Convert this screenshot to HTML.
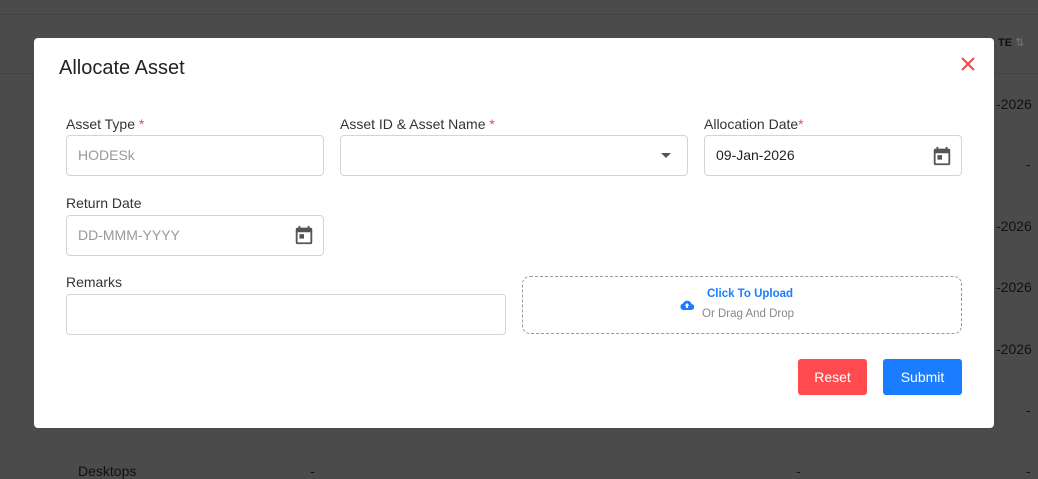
<!DOCTYPE html>
<html><head><style>
*{box-sizing:border-box;margin:0;padding:0}
body{width:1038px;height:478px;overflow:hidden;background:#4b4b4b;font-family:"Liberation Sans",sans-serif;position:relative;color:#222}
.bg{position:absolute;left:0;right:0;height:1px;background:#434343}
.bgt{position:absolute;color:#111;font-size:14px}
.modal{position:absolute;left:34px;top:38px;width:960px;height:390px;background:#fff;border-radius:4px}
.abs{position:absolute}
.lbl{position:absolute;font-size:14px;color:#333}
.req{color:#e84b4b}
.inp{position:absolute;height:41px;border:1px solid #d4d4d4;border-radius:4px;font-size:14px;padding-left:11px;line-height:39px}
.ph{color:#999}
.btn{position:absolute;height:36px;border-radius:3px;color:#fff;font-size:14px;text-align:center;line-height:36px}
</style></head><body>
<div class="bg" style="top:14px"></div>
<div class="bg" style="top:73px"></div>
<div class="bgt" style="left:998px;top:36px;font-size:11px;font-weight:bold">TE <span style="color:#777;font-weight:normal">⇅</span></div>
<div class="bgt" style="left:996px;top:96px">-2026</div>
<div class="bgt" style="left:1026px;top:156px">-</div>
<div class="bgt" style="left:996px;top:218px">-2026</div>
<div class="bgt" style="left:996px;top:279px">-2026</div>
<div class="bgt" style="left:996px;top:341px">-2026</div>
<div class="bgt" style="left:1026px;top:402px">-</div>
<div class="bgt" style="left:78px;top:463px">Desktops</div>
<div class="bgt" style="left:310px;top:463px">-</div>
<div class="bgt" style="left:796px;top:463px">-</div>
<div class="bgt" style="left:1026px;top:463px">-</div>
<div class="modal">
<div class="abs" style="left:25px;top:19px;font-size:20px;color:#222">Allocate Asset</div>
<svg class="abs" style="left:927px;top:19px" width="14" height="14" viewBox="0 0 14 14"><path d="M1 1L13 13M13 1L1 13" stroke="#f04848" stroke-width="2"/></svg>
<div class="lbl" style="left:32px;top:78px">Asset Type <span class="req">*</span></div>
<div class="inp ph" style="left:32px;top:97px;width:258px">HODESk</div>
<div class="lbl" style="left:306px;top:78px">Asset ID &amp; Asset Name <span class="req">*</span></div>
<div class="inp" style="left:306px;top:97px;width:348px"></div>
<svg class="abs" style="left:627px;top:115px" width="10" height="6"><path d="M0 0L10 0L5 5Z" fill="#555"/></svg>
<div class="lbl" style="left:670px;top:78px">Allocation Date<span class="req">*</span></div>
<div class="inp" style="left:670px;top:97px;width:258px">09-Jan-2026</div>
<svg class="abs" style="left:897px;top:107px" width="22" height="22" viewBox="0 0 24 24"><path fill="#555" d="M19 4h-1V2h-2v2H8V2H6v2H5a2 2 0 0 0-2 2v14a2 2 0 0 0 2 2h14a2 2 0 0 0 2-2V6a2 2 0 0 0-2-2zm0 16H5V9h14v11zM7 11h5v5H7z"/></svg>
<div class="lbl" style="left:32px;top:157px">Return Date</div>
<div class="inp ph" style="left:32px;top:177px;width:258px">DD-MMM-YYYY</div>
<svg class="abs" style="left:259px;top:186px" width="22" height="22" viewBox="0 0 24 24"><path fill="#555" d="M19 4h-1V2h-2v2H8V2H6v2H5a2 2 0 0 0-2 2v14a2 2 0 0 0 2 2h14a2 2 0 0 0 2-2V6a2 2 0 0 0-2-2zm0 16H5V9h14v11zM7 11h5v5H7z"/></svg>
<div class="lbl" style="left:32px;top:236px">Remarks</div>
<div class="inp" style="left:32px;top:256px;width:440px"></div>
<div class="abs" style="left:488px;top:238px;width:440px;height:58px;border:1px dashed #999;border-radius:8px"></div>
<svg class="abs" style="left:646px;top:261px" width="14" height="12" viewBox="0 0 14 12"><path fill="#1a7cff" d="M3.5 11A3.3 3.3 0 0 1 3 4.5 4.5 4.5 0 0 1 11.5 5 3 3 0 0 1 11 11Z"/><path fill="#fff" d="M7 4L9.5 6.8H8V9H6V6.8H4.5Z"/></svg>
<div class="abs" style="left:673px;top:250px;font-size:11.5px;font-weight:bold;color:#1a7cff">Click To Upload</div>
<div class="abs" style="left:668px;top:270px;font-size:11.5px;color:#888">Or Drag And Drop</div>
<div class="btn" style="left:764px;top:321px;width:69px;background:#ff4b4f">Reset</div>
<div class="btn" style="left:849px;top:321px;width:79px;background:#1a7cff">Submit</div>
</div>
</body></html>
